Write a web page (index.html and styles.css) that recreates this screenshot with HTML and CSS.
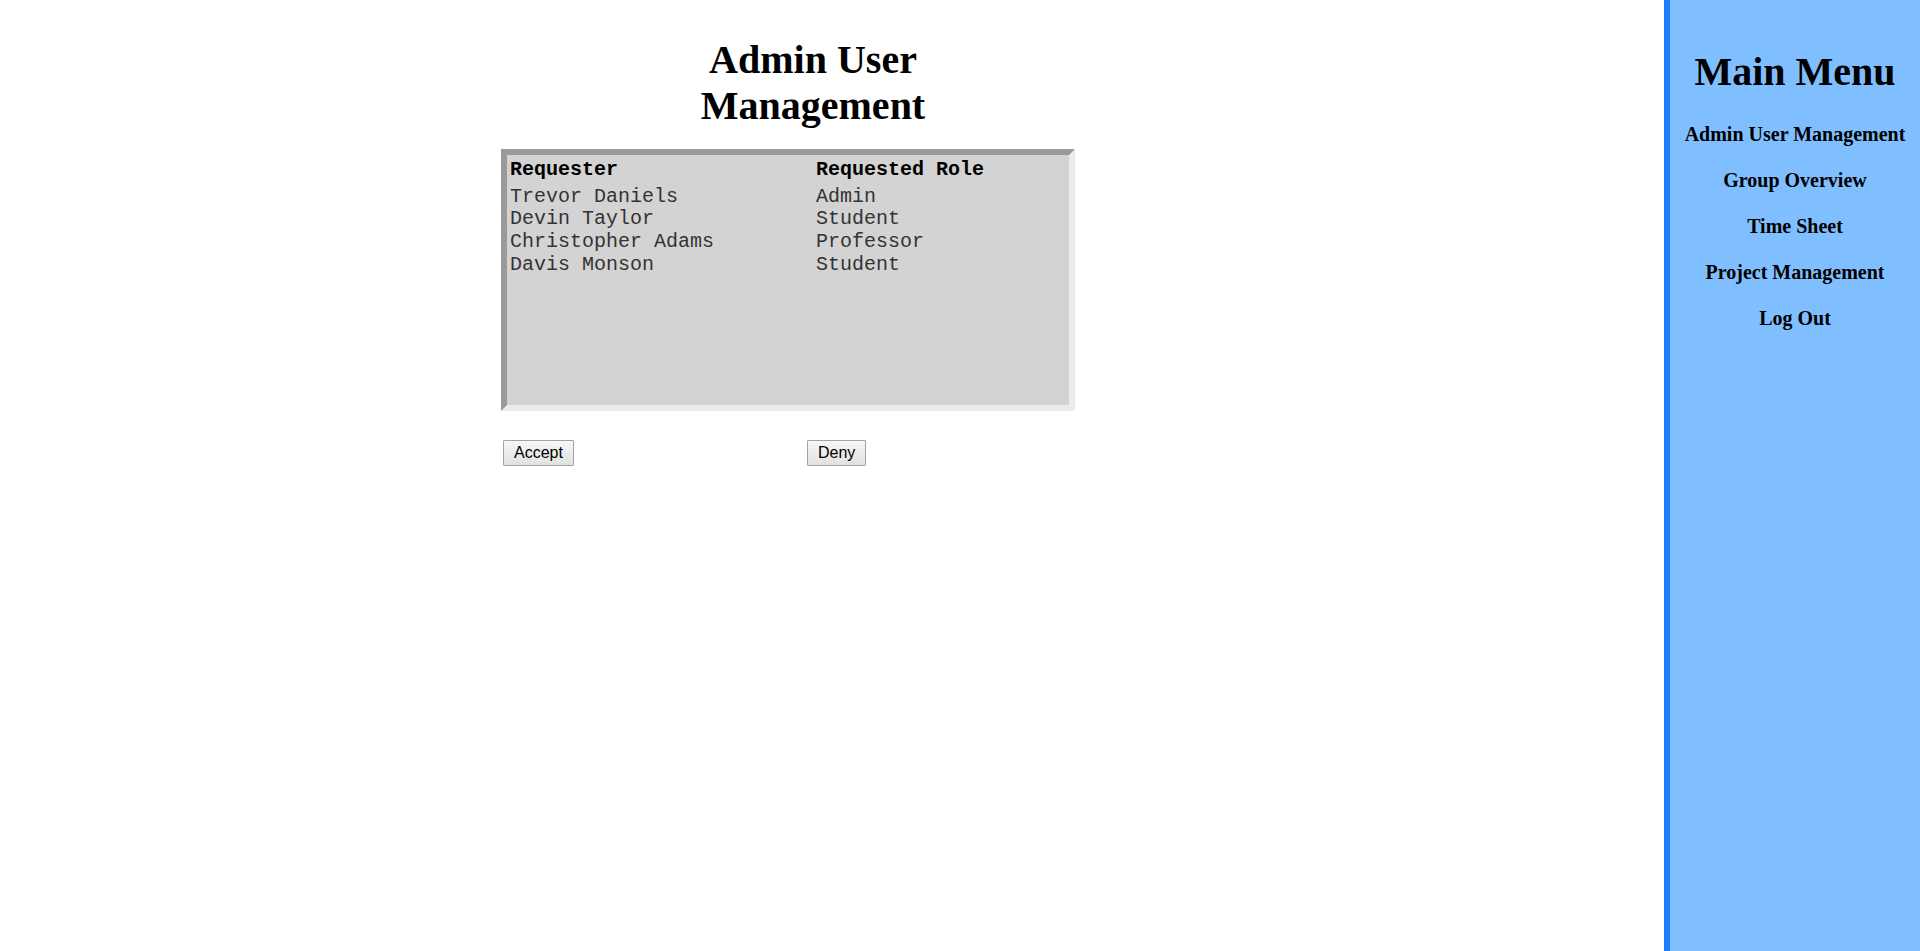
FILE: index.html
```html
<!DOCTYPE html>
<html lang="en">
<head>
<meta charset="utf-8">
<title>Admin User Management</title>
<link rel="stylesheet" href="styles.css">
</head>
<body>
<div class="layout">
  <main class="content">
    <h1 class="page-title">Admin User Management</h1>
    <div class="request-box">
      <div class="request-grid">
        <div class="cell head">Requester</div>
        <div class="cell head">Requested Role</div>
        <div class="cell">Trevor Daniels</div>
        <div class="cell">Admin</div>
        <div class="cell">Devin Taylor</div>
        <div class="cell">Student</div>
        <div class="cell">Christopher Adams</div>
        <div class="cell">Professor</div>
        <div class="cell">Davis Monson</div>
        <div class="cell">Student</div>
      </div>
    </div>
    <div class="actions">
      <div><button class="btn" type="button">Accept</button></div>
      <div><button class="btn" type="button">Deny</button></div>
    </div>
  </main>
  <aside class="sidebar">
    <h1 class="menu-title">Main Menu</h1>
    <nav class="menu">
      <a class="menu-link" href="#">Admin User Management</a>
      <a class="menu-link" href="#">Group Overview</a>
      <a class="menu-link" href="#">Time Sheet</a>
      <a class="menu-link" href="#">Project Management</a>
      <a class="menu-link" href="#">Log Out</a>
    </nav>
  </aside>
</div>
</body>
</html>
```

FILE: styles.css
```css
html, body {
  margin: 0;
  padding: 0;
  height: 100%;
}

body {
  font-family: "Liberation Serif", "Times New Roman", serif;
  color: #000;
  background: #fff;
}

.layout {
  display: flex;
  min-height: 100vh;
}

.content {
  flex: 1;
  padding: 37px 0 0 501px;
}

.page-title {
  width: 330px;
  margin: 0 0 20px 147px;
  font-size: 40px;
  line-height: 46px;
  font-weight: bold;
  text-align: center;
}

.request-box {
  box-sizing: border-box;
  width: 574px;
  height: 262px;
  padding: 4px 3px;
  background: #d3d3d3;
  border-style: solid;
  border-width: 6px;
  border-color: #9a9a9a #ececec #ececec #9a9a9a;
}

.request-grid {
  display: grid;
  grid-template-columns: 306px 1fr;
  font-family: "Liberation Mono", "Courier New", monospace;
  font-size: 20px;
  line-height: 22.66px;
  color: #333;
}

.cell {
  white-space: pre;
}

.cell.head {
  font-weight: bold;
  color: #000;
  padding-bottom: 4px;
}

.actions {
  display: grid;
  grid-template-columns: 304px auto;
  margin-top: 29px;
  padding-left: 2px;
}

.btn {
  font-family: "Liberation Sans", Arial, sans-serif;
  font-size: 16px;
  line-height: 18px;
  padding: 3px 10px;
  margin: 0;
  color: #000;
  border: 1px solid #a3a3a3;
  border-radius: 1px;
  background: linear-gradient(#f7f7f7, #e1e1e1);
}

.sidebar {
  width: 250px;
  flex: none;
  border-left: 6px solid #1a80ff;
  background: #80bfff;
  padding-top: 49px;
  text-align: center;
}

.menu-title {
  margin: 0;
  font-size: 40px;
  line-height: 46px;
  font-weight: bold;
}

.menu {
  display: flex;
  flex-direction: column;
  gap: 23px;
  margin-top: 28px;
}

.menu-link {
  font-size: 20px;
  line-height: 23px;
  font-weight: bold;
  color: #000;
  text-decoration: none;
}
```
